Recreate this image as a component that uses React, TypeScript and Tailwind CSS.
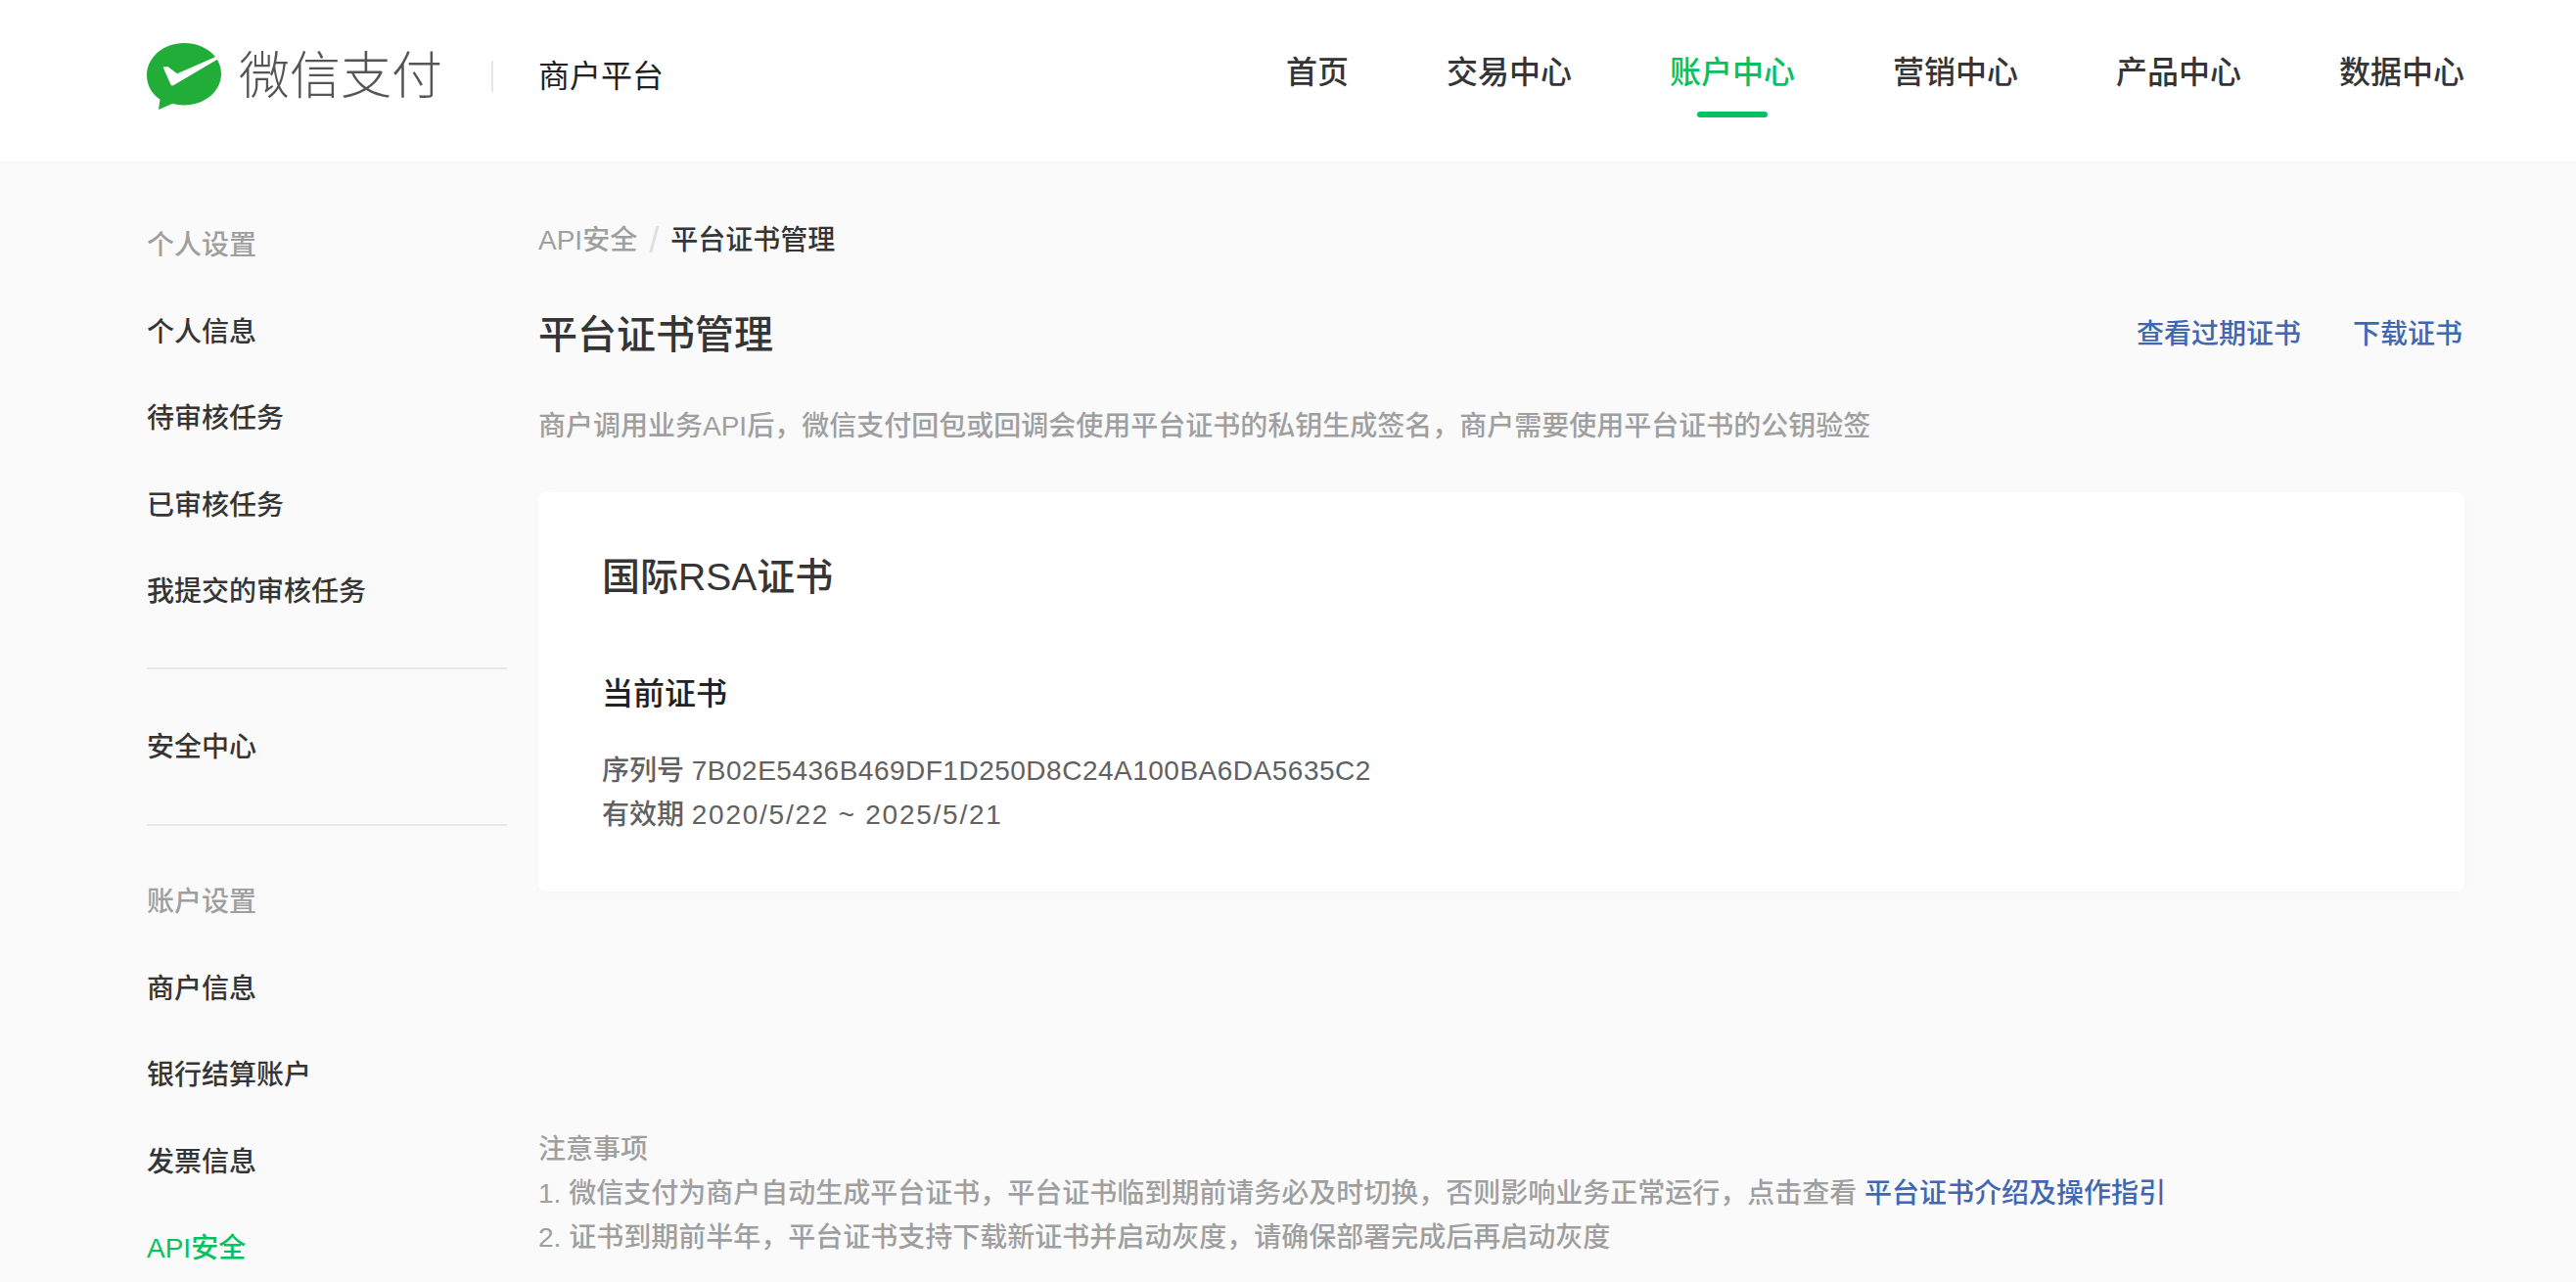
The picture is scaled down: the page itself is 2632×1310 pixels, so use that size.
import React from 'react'

const FONT = "font-['Liberation_Sans','Noto_Sans_CJK_SC',sans-serif]"

const navItems = ['首页', '交易中心', '账户中心', '营销中心', '产品中心', '数据中心']

function WechatPayLogo() {
  return (
    <svg width="76" height="68" viewBox="0 0 76 68" className="shrink-0">
      <path
        d="M38 0C17 0 0 14.500 0 33C0 43.500 5.500 52.500 13.500 57.500L12 68L26.500 61.800C30 62.800 33.500 63.500 38 63.500C59 63.500 76 49.300 76 31.500C76 25.800 74.300 20.500 71.300 15.800C64.500 5.800 52 0 38 0Z"
        fill="#22ac38"
      />
      <path
        d="M16.500 24.500L21.500 24L31 31.300L71.500 13.500L72.500 16.500L27.500 43C26 44 25 43.700 24.500 42.500Z"
        fill="#fff"
      />
    </svg>
  )
}

function Header() {
  return (
    <header className="flex h-[165px] items-center justify-between bg-white pb-[10px] pl-[150px] pr-[114px] shadow-[0_1px_4px_rgba(0,0,0,0.04)]">
      <div className="flex items-center">
        <WechatPayLogo />
        <span className="ml-[18px] text-[52px] font-light leading-none text-[#555]">微信支付</span>
        <span className="ml-[50px] h-8 w-0.5 bg-[#e6e6e6]" />
        <span className="ml-[46px] text-[32px] text-[#222]">商户平台</span>
      </div>
      <nav className="mb-[6px] flex gap-[100px]">
        {navItems.map((item) => {
          const active = item === '账户中心'
          return (
            <div key={item} className="relative">
              <span className={`text-[32px] font-medium leading-none ${active ? 'text-[#07c160]' : 'text-[#353535]'}`}>
                {item}
              </span>
              {active && (
                <span className="absolute left-[28px] top-[56px] h-1.5 w-[72px] rounded-[3px] bg-[#07c160]" />
              )}
            </div>
          )
        })}
      </nav>
    </header>
  )
}

function SideLabel({ children }: { children: React.ReactNode }) {
  return <div className="flex h-[88.5px] items-center text-[28px] font-medium text-[#9f9f9f]">{children}</div>
}

function SideItem({ children, active }: { children: React.ReactNode; active?: boolean }) {
  return (
    <div className={`flex h-[88.5px] items-center text-[28px] font-medium ${active ? 'text-[#07c160]' : 'text-[#353535]'}`}>
      {children}
    </div>
  )
}

function Sidebar() {
  return (
    <aside className="w-[368px] shrink-0 pt-[42px]">
      <SideLabel>个人设置</SideLabel>
      <SideItem>个人信息</SideItem>
      <SideItem>待审核任务</SideItem>
      <SideItem>已审核任务</SideItem>
      <SideItem>我提交的审核任务</SideItem>
      <div className="mb-9 mt-8 h-0.5 bg-[#e6e6e6]" />
      <SideItem>安全中心</SideItem>
      <div className="mb-[34px] mt-[34px] h-0.5 bg-[#e6e6e6]" />
      <SideLabel>账户设置</SideLabel>
      <SideItem>商户信息</SideItem>
      <SideItem>银行结算账户</SideItem>
      <SideItem>发票信息</SideItem>
      <SideItem active>API安全</SideItem>
    </aside>
  )
}

function Main() {
  return (
    <main className="ml-8 flex-1 pt-[63px]">
      <div className="flex h-9 items-center text-[28px] font-medium leading-9">
        <span className="text-[#9f9f9f]">API安全</span>
        <span className="mx-[12px] text-[36px] text-[#dedede]">/</span>
        <span className="text-[#353535]">平台证书管理</span>
      </div>
      <div className="mt-[48px] flex items-center justify-between">
        <h1 className="text-[40px] font-medium leading-[60px] text-[#353535]">平台证书管理</h1>
        <div className="mr-0.5 flex gap-[53px] text-[28px] font-medium text-[#4267b2]">
          <a>查看过期证书</a>
          <a>下载证书</a>
        </div>
      </div>
      <p className="mt-[46px] text-[28px] font-medium leading-9 text-[#9f9f9f]">
        商户调用业务API后，微信支付回包或回调会使用平台证书的私钥生成签名，商户需要使用平台证书的公钥验签
      </p>
      <section className="mt-[49px] h-[408px] rounded-lg bg-white px-[65px] pt-[60px] shadow-[0_2px_8px_rgba(0,0,0,0.02)]">
        <h2 className="text-[39px] font-medium leading-[54px] text-[#353535]">国际RSA证书</h2>
        <h3 className="mt-[68px] text-[32px] font-medium leading-[48px] text-[#222]">当前证书</h3>
        <div className="mt-[32px] text-[28px] font-medium leading-[45px] text-[#616161]">
          <p>
            序列号 <span className="tracking-[0.5px]">7B02E5436B469DF1D250D8C24A100BA6DA5635C2</span>
          </p>
          <p>
            有效期 <span className="tracking-[1.75px]">2020/5/22 ~ 2025/5/21</span>
          </p>
        </div>
      </section>
      <div className="mt-[241px] text-[28px] font-medium leading-[45px] text-[#9f9f9f]">
        <p>注意事项</p>
        <p>
          1. 微信支付为商户自动生成平台证书，平台证书临到期前请务必及时切换，否则影响业务正常运行，点击查看{' '}
          <a className="text-[#4267b2]">平台证书介绍及操作指引</a>
        </p>
        <p>2. 证书到期前半年，平台证书支持下载新证书并启动灰度，请确保部署完成后再启动灰度</p>
      </div>
    </main>
  )
}

export default function App() {
  return (
    <div className={`h-[1310px] overflow-hidden bg-[#fafafa] ${FONT}`}>
      <Header />
      <div className="flex pl-[150px] pr-[114px]">
        <Sidebar />
        <Main />
      </div>
    </div>
  )
}
